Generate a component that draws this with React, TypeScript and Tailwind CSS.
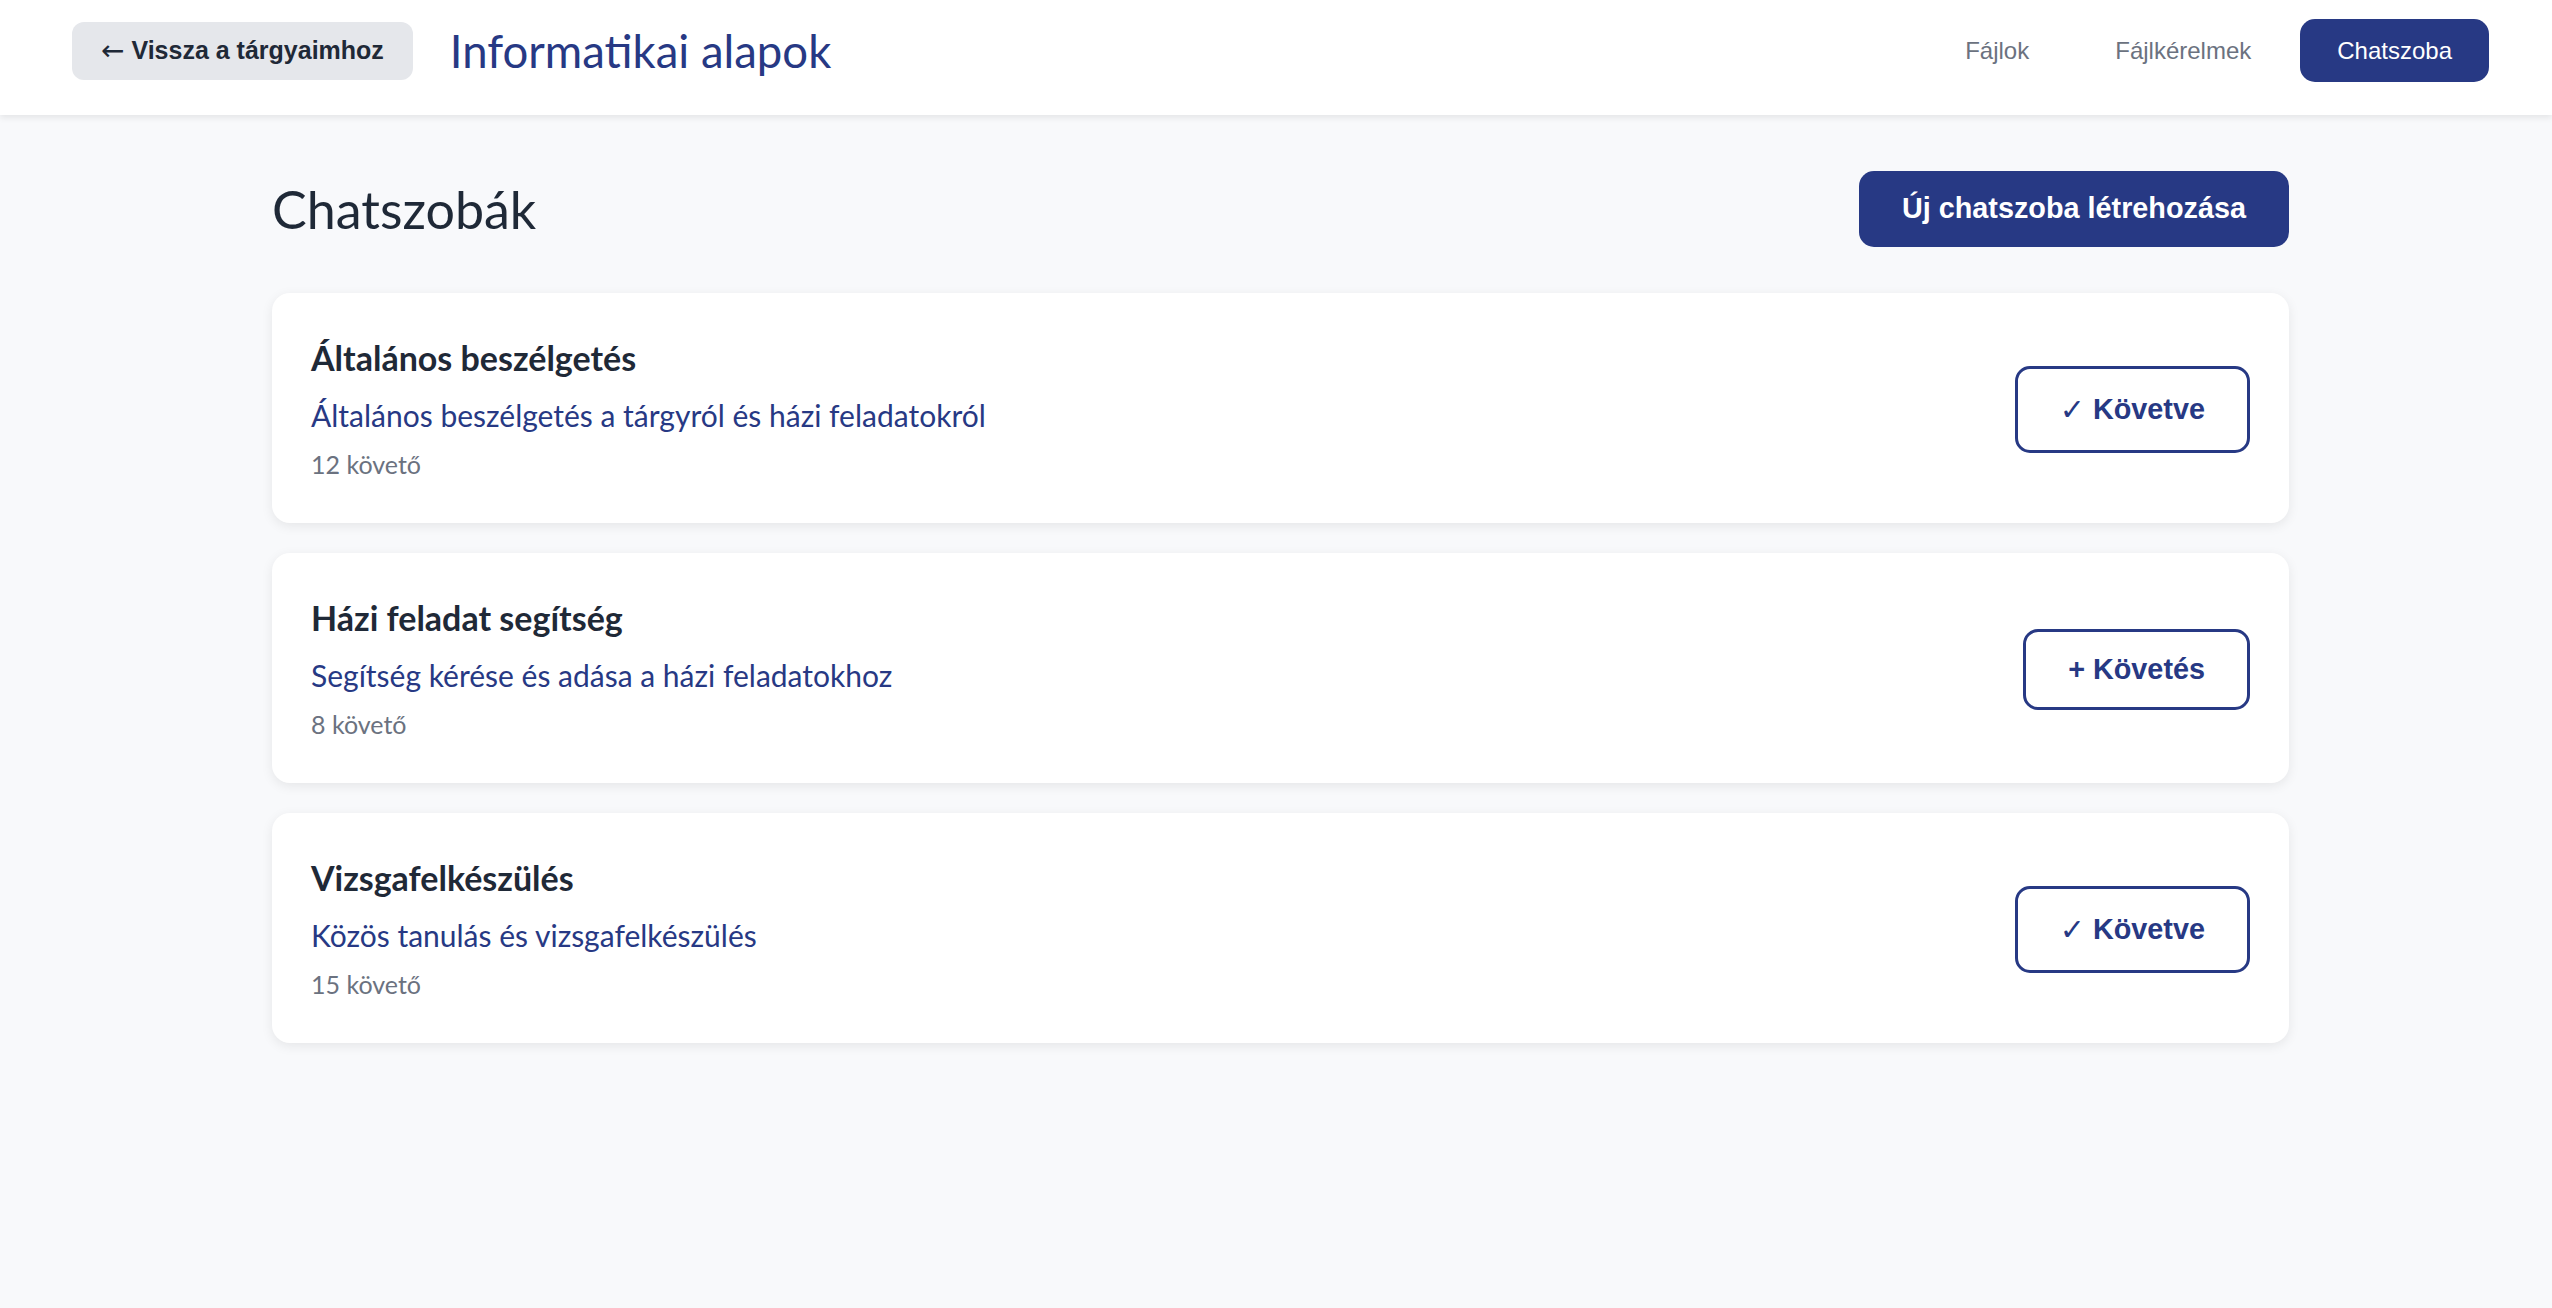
import React from "react";

type Room = { title: string; desc: string; followers: number; following: boolean };

const rooms: Room[] = [
  { title: "Általános beszélgetés", desc: "Általános beszélgetés a tárgyról és házi feladatokról", followers: 12, following: true },
  { title: "Házi feladat segítség", desc: "Segítség kérése és adása a házi feladatokhoz", followers: 8, following: false },
  { title: "Vizsgafelkészülés", desc: "Közös tanulás és vizsgafelkészülés", followers: 15, following: true },
];

function RoomCard({ room }: { room: Room }) {
  return (
    <div className="flex items-center justify-between bg-white rounded-[18px] shadow-[0_3px_12px_rgba(0,0,0,0.08)] px-[39px] pt-[45px] pb-[43px]">
      <div className="flex flex-col font-['Lato',sans-serif]">
        <div className="text-[34px] leading-[40px] font-bold text-[#1f2937]">{room.title}</div>
        <div className="mt-[19px] text-[30px] leading-[36px] text-[#273984]">{room.desc}</div>
        <div className="mt-[15px] text-[25px] leading-[32px] text-[#6b7280]">{room.followers} követő</div>
      </div>
      {room.following ? (
        <button className="flex items-center h-[87px] bg-white border-[3px] border-[#273984] rounded-[15px] px-[42px] text-[28.8px] leading-[33px] font-bold text-[#273984] font-['Liberation_Sans',Arial,sans-serif]">
          <span className="font-['DejaVu_Sans',sans-serif] font-bold text-[30px] leading-[33px]">✓</span>
          <span>&nbsp;Követve</span>
        </button>
      ) : (
        <button className="h-[81px] bg-white border-[3px] border-[#273984] rounded-[15px] px-[42px] text-[28.8px] leading-[33px] font-bold text-[#273984] font-['Liberation_Sans',Arial,sans-serif]">
          + Követés
        </button>
      )}
    </div>
  );
}

export default function App() {
  return (
    <div className="min-h-screen bg-[#f8f9fb]">
      <header className="h-[115px] bg-white shadow-[0_3px_6px_rgba(0,0,0,0.08)] flex items-start justify-between pl-[72px] pr-[63px] pt-[19px]">
        <div className="flex items-center h-[63px] gap-[37px]">
          <button className="h-[58px] px-[29px] rounded-[12px] bg-[#e5e7eb] text-[#1f2937] font-bold text-[25px] font-['Liberation_Sans',Arial,sans-serif] flex items-center">
            <span className="font-normal font-['DejaVu_Sans',sans-serif] text-[28px] leading-[30px]">←</span>
            <span>&nbsp;Vissza a tárgyaimhoz</span>
          </button>
          <h1 className="text-[45.5px] leading-[56px] text-[#273984] font-['Lato',sans-serif]">Informatikai alapok</h1>
        </div>
        <nav className="flex items-center gap-[12px] font-['Liberation_Sans',Arial,sans-serif] text-[24px]">
          <button className="h-[63px] px-[37px] rounded-[15px] text-[#6b7280]">Fájlok</button>
          <button className="h-[63px] px-[37px] rounded-[15px] text-[#6b7280]">Fájlkérelmek</button>
          <button className="h-[63px] px-[37px] rounded-[15px] bg-[#273984] text-white">Chatszoba</button>
        </nav>
      </header>

      <main className="ml-[272px] w-[2017px] pt-[56px]">
        <div className="flex items-center justify-between mb-[46px]">
          <h2 className="text-[52px] leading-[62px] text-[#1f2937] font-['Lato',sans-serif]">Chatszobák</h2>
          <button className="h-[76px] px-[43px] rounded-[15px] bg-[#273984] text-white font-bold text-[28.8px] font-['Liberation_Sans',Arial,sans-serif]">
            Új chatszoba létrehozása
          </button>
        </div>
        <div className="flex flex-col gap-[30px]">
          {rooms.map((r) => (
            <RoomCard key={r.title} room={r} />
          ))}
        </div>
      </main>
    </div>
  );
}
